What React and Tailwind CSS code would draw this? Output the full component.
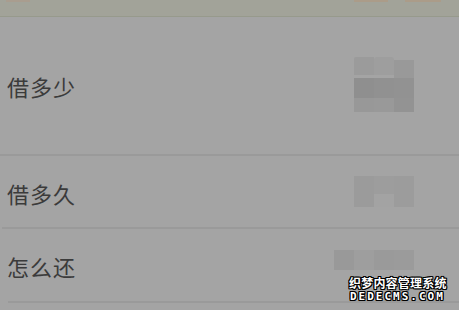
import React from "react";

const cjk = { fontFamily: '"Noto Sans CJK SC", "Noto Sans", sans-serif' };

const outline =
  "1px 0 0 #000, -1px 0 0 #000, 0 1px 0 #000, 0 -1px 0 #000, 1px 1px 0 #000, -1px -1px 0 #000, 1px -1px 0 #000, -1px 1px 0 #000";

const Row = ({ label, height, children, lineClass }) => (
  <div className={"relative flex items-center justify-between " + height}>
    <span className="pl-[7px] text-[22px] leading-none text-[#3b3b3b] tracking-[1px]" style={cjk}>
      {label}
    </span>
    <div className="pr-[45px]">{children}</div>
    <div className={"absolute bottom-0 right-0 h-[2px] bg-[#9a9a9a] " + lineClass} />
  </div>
);

export default function App() {
  return (
    <div className="relative w-[459px] h-[310px] overflow-hidden bg-[#a4a4a4]">
      {/* top bar */}
      <div className="relative h-[17px] bg-[#a2a399] border-b border-[#979a8c]">
        <div className="absolute left-[6px] top-0 w-[24px] h-[2px] bg-[#ad9a88] opacity-60" />
        <div className="absolute left-[354px] top-0 w-[34px] h-[2px] bg-[#b0977f] opacity-60" />
        <div className="absolute left-[405px] top-0 w-[36px] h-[2px] bg-[#b0977f] opacity-60" />
      </div>

      <Row label="借多少" height="h-[139px] pb-[2px]" lineClass="left-0">
        <div className="flex flex-col w-[60px] mt-[-3px]">
          <div className="flex">
            <div className="w-[20px] h-[18px] bg-[#9b9b9b] rounded-tl-[2px]" />
            <div className="w-[20px] h-[18px] bg-[#9e9e9e] rounded-t-[3px]" />
            <div className="w-[20px] h-[18px] bg-[#999999] mt-[3px]" />
          </div>
          <div className="flex">
            <div className="w-[20px] h-[20px] bg-[#8f8f8f]" />
            <div className="w-[20px] h-[20px] bg-[#919191]" />
            <div className="w-[20px] h-[20px] bg-[#929292]" />
          </div>
          <div className="flex">
            <div className="w-[20px] h-[14px] bg-[#989898]" />
            <div className="w-[20px] h-[14px] bg-[#999999]" />
            <div className="w-[20px] h-[14px] bg-[#939393]" />
          </div>
        </div>
      </Row>

      <Row label="借多久" height="h-[73px]" lineClass="left-[2px]">
        <div className="flex w-[60px] h-[31px] mb-[3px]">
          <div className="w-[20px] bg-[#9b9b9b]" />
          <div className="w-[20px] flex flex-col">
            <div className="h-[18px] bg-[#9d9d9d]" />
            <div className="flex-1 bg-[#a3a3a3]" />
          </div>
          <div className="w-[20px] bg-[#9c9c9c]" />
        </div>
      </Row>

      <Row label="怎么还" height="h-[74px]" lineClass="left-[8px]">
        <div className="flex w-[80px] h-[20px] mb-[12px]">
          <div className="w-[20px] bg-[#999999]" />
          <div className="w-[20px] bg-[#9e9e9e]" />
          <div className="w-[20px] bg-[#9a9a9a]" />
          <div className="w-[20px] bg-[#9b9b9b]" />
        </div>
      </Row>

      {/* watermark */}
      <div className="absolute left-[349px] top-[276px] flex flex-col items-start text-white">
        <span
          className="text-[12px] leading-[14px] font-bold tracking-[0.2px]"
          style={{ ...cjk, textShadow: outline }}
        >
          织梦内容管理系统
        </span>
        <span
          className="text-[11px] leading-[10px] font-bold tracking-[2px] mt-[2px] ml-[1px]"
          style={{ fontFamily: '"DejaVu Sans Mono", monospace', textShadow: outline }}
        >
          DEDECMS.COM
        </span>
      </div>
    </div>
  );
}
